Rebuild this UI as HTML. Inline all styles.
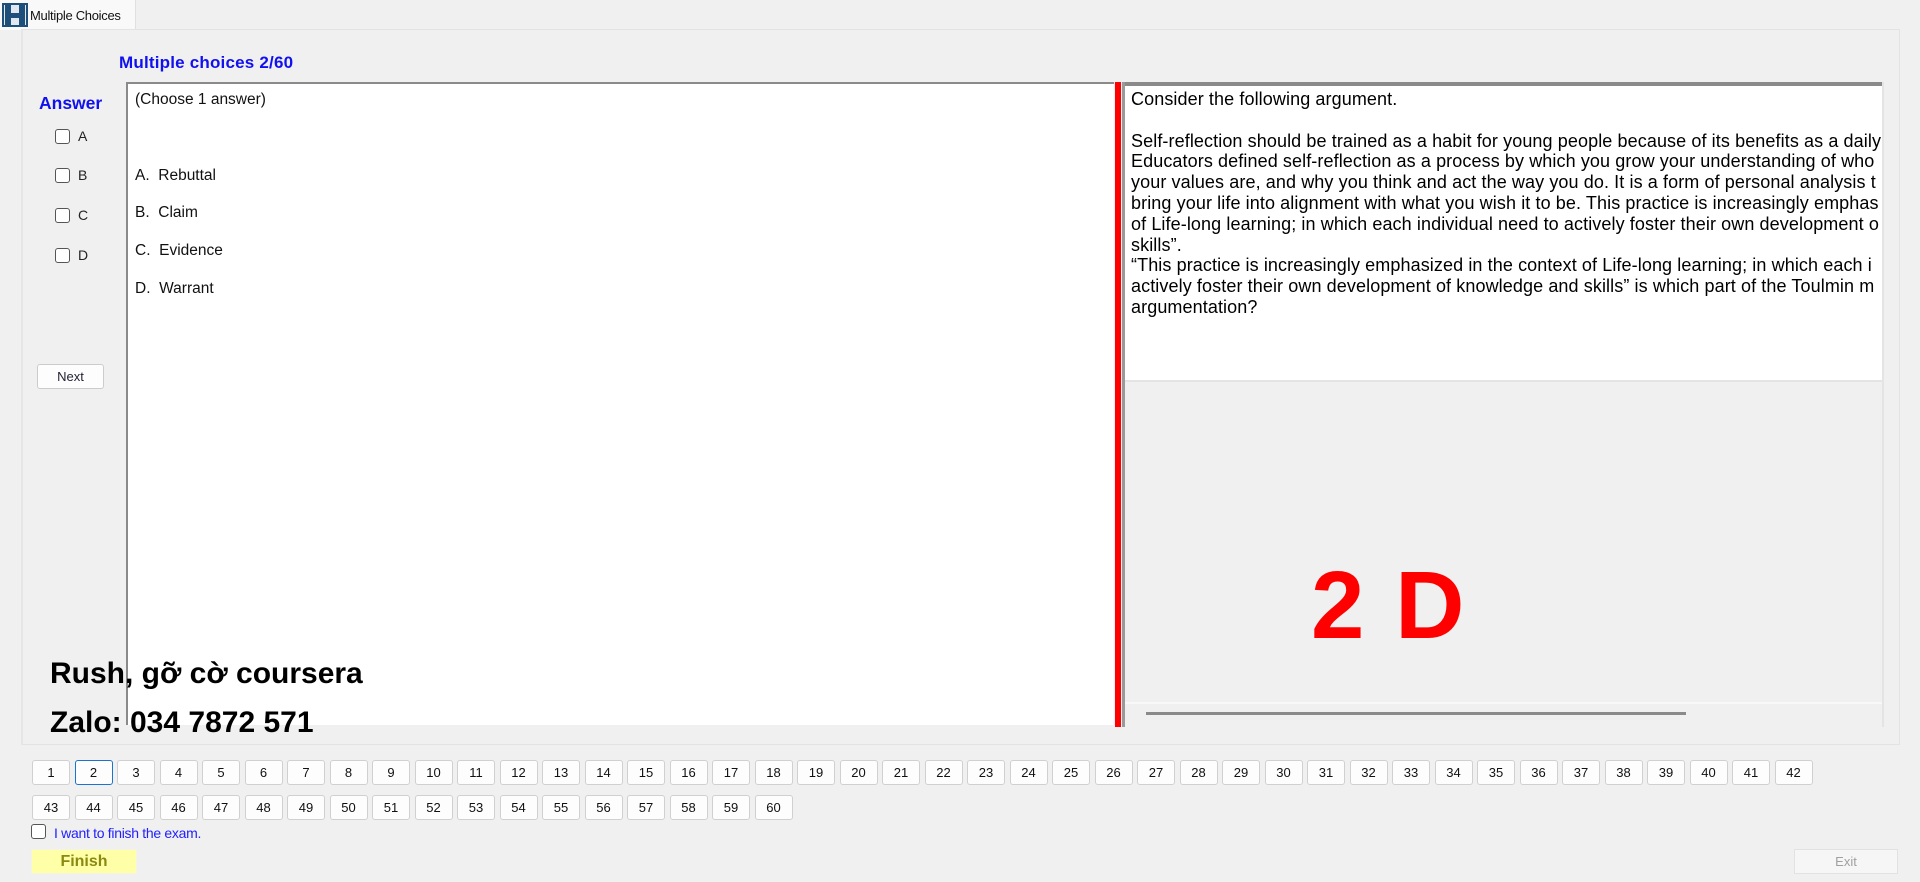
<!DOCTYPE html>
<html><head><meta charset="utf-8"><style>
*{margin:0;padding:0;box-sizing:border-box}
body{width:1920px;height:882px;background:#f0f0f0;font-family:"Liberation Sans",Arial,sans-serif;position:relative;overflow:hidden}
.a{position:absolute}
.tab{left:0;top:0;width:136px;height:30px;background:#f9f9f9;border-right:1px solid #e0e0e0}
.panel{left:21px;top:29px;width:1879px;height:716px;border:1px solid #e3e3e3;border-left:2px solid #e6e6e6;background:#f0f0f0}
.cb{width:15px;height:15px;border:1px solid #555;border-radius:3px;background:#fff}
.lbl{font-size:14px;color:#222}
.opt{font-size:15.5px;color:#111;left:135px}
.nb{position:absolute;width:38px;height:25px;background:#fdfdfd;border:1px solid #d0d0d0;border-radius:3px;font-size:13px;text-align:center;line-height:23px;color:#111}
</style></head><body>
<div class="a tab"></div>
<svg class="a" style="left:2px;top:3px" width="26" height="24" viewBox="0 0 26 24"><rect width="26" height="24" fill="#1d4f7a"/><rect x="2" y="2" width="22" height="20" fill="#dfe7ef"/><rect x="3" y="2" width="6" height="20" fill="#1d4f7a"/><rect x="17" y="2" width="6" height="20" fill="#1d4f7a"/><rect x="9" y="10" width="8" height="5" fill="#1d4f7a"/></svg>
<div class="a" style="left:30px;top:8px;font-size:13px;color:#111;letter-spacing:-0.3px">Multiple Choices</div>
<div class="a panel"></div>
<div class="a" style="left:119px;top:53px;font-size:17px;font-weight:bold;color:#1010f0;letter-spacing:0.2px">Multiple choices 2/60</div>
<div class="a" style="left:39px;top:93px;font-size:17.5px;font-weight:bold;color:#1010f0">Answer</div>
<div class="a cb" style="left:55px;top:129px"></div><div class="a lbl" style="left:78px;top:128px">A</div>
<div class="a cb" style="left:55px;top:168px"></div><div class="a lbl" style="left:78px;top:167px">B</div>
<div class="a cb" style="left:55px;top:208px"></div><div class="a lbl" style="left:78px;top:207px">C</div>
<div class="a cb" style="left:55px;top:248px"></div><div class="a lbl" style="left:78px;top:247px">D</div>
<div class="a" style="left:37px;top:364px;width:67px;height:25px;background:#fdfdfd;border:1px solid #ccc;border-radius:3px;font-size:13px;text-align:center;line-height:23px;color:#223">Next</div>
<div class="a" style="left:126px;top:82px;width:988px;height:643px;background:#fff;border-left:2px solid #8a8a8a;border-top:2px solid #8a8a8a"></div>
<div class="a opt" style="top:91px">(Choose 1 answer)</div>
<div class="a opt" style="top:167px">A.&nbsp; Rebuttal</div>
<div class="a opt" style="top:204px">B.&nbsp; Claim</div>
<div class="a opt" style="top:242px">C.&nbsp; Evidence</div>
<div class="a opt" style="top:280px">D.&nbsp; Warrant</div>
<div class="a" style="left:1115px;top:82px;width:6px;height:645px;background:#ff0000"></div>
<div class="a" style="left:1122px;top:82px;width:3px;height:645px;background:#9a9a9a"></div>
<div class="a" style="left:1125px;top:82px;width:757px;height:298px;background:#fff;border-top:4px solid #8a8a8a;overflow:hidden">
<div style="position:absolute;left:6px;top:3px;font-size:18px;line-height:20.8px;white-space:nowrap;color:#000;letter-spacing:0.1px">
Consider the following argument.<br><br>
Self-reflection should be trained as a habit for young people because of its benefits as a daily<br>
Educators defined self-reflection as a process by which you grow your understanding of who<br>
your values are, and why you think and act the way you do. It is a form of personal analysis t<br>
bring your life into alignment with what you wish it to be. This practice is increasingly emphas<br>
of Life-long learning; in which each individual need to actively foster their own development o<br>
skills”.<br>
“This practice is increasingly emphasized in the context of Life-long learning; in which each i<br>
actively foster their own development of knowledge and skills” is which part of the Toulmin m<br>
argumentation?</div></div>
<div class="a" style="left:1125px;top:380px;width:757px;height:2px;background:#e4e4e4"></div>
<div class="a" style="left:1125px;top:702px;width:757px;height:2px;background:#f8f8f8"></div>
<div class="a" style="left:1146px;top:712px;width:540px;height:3px;background:#8a8a8a"></div>
<div class="a" style="left:1882px;top:82px;width:2px;height:645px;background:#e4e4e4"></div>
<div class="a" style="left:1311px;top:551px;font-size:96px;font-weight:bold;color:#ff0000;letter-spacing:2px">2 D</div>
<div class="a" style="left:50px;top:657px;font-size:30px;font-weight:bold;color:#000">Rush, gỡ cờ coursera</div>
<div class="a" style="left:50px;top:706px;font-size:30px;font-weight:bold;color:#000">Zalo: 034 7872 571</div>
<div class="nb" style="left:32px;top:760px">1</div><div class="nb" style="left:74.5px;top:760px;border:1px solid #1a73d0">2</div><div class="nb" style="left:117px;top:760px">3</div><div class="nb" style="left:159.5px;top:760px">4</div><div class="nb" style="left:202px;top:760px">5</div><div class="nb" style="left:244.5px;top:760px">6</div><div class="nb" style="left:287px;top:760px">7</div><div class="nb" style="left:329.5px;top:760px">8</div><div class="nb" style="left:372px;top:760px">9</div><div class="nb" style="left:414.5px;top:760px">10</div><div class="nb" style="left:457px;top:760px">11</div><div class="nb" style="left:499.5px;top:760px">12</div><div class="nb" style="left:542px;top:760px">13</div><div class="nb" style="left:584.5px;top:760px">14</div><div class="nb" style="left:627px;top:760px">15</div><div class="nb" style="left:669.5px;top:760px">16</div><div class="nb" style="left:712px;top:760px">17</div><div class="nb" style="left:754.5px;top:760px">18</div><div class="nb" style="left:797px;top:760px">19</div><div class="nb" style="left:839.5px;top:760px">20</div><div class="nb" style="left:882px;top:760px">21</div><div class="nb" style="left:924.5px;top:760px">22</div><div class="nb" style="left:967px;top:760px">23</div><div class="nb" style="left:1009.5px;top:760px">24</div><div class="nb" style="left:1052px;top:760px">25</div><div class="nb" style="left:1094.5px;top:760px">26</div><div class="nb" style="left:1137px;top:760px">27</div><div class="nb" style="left:1179.5px;top:760px">28</div><div class="nb" style="left:1222px;top:760px">29</div><div class="nb" style="left:1264.5px;top:760px">30</div><div class="nb" style="left:1307px;top:760px">31</div><div class="nb" style="left:1349.5px;top:760px">32</div><div class="nb" style="left:1392px;top:760px">33</div><div class="nb" style="left:1434.5px;top:760px">34</div><div class="nb" style="left:1477px;top:760px">35</div><div class="nb" style="left:1519.5px;top:760px">36</div><div class="nb" style="left:1562px;top:760px">37</div><div class="nb" style="left:1604.5px;top:760px">38</div><div class="nb" style="left:1647px;top:760px">39</div><div class="nb" style="left:1689.5px;top:760px">40</div><div class="nb" style="left:1732px;top:760px">41</div><div class="nb" style="left:1774.5px;top:760px">42</div>
<div class="nb" style="left:32px;top:795px">43</div><div class="nb" style="left:74.5px;top:795px">44</div><div class="nb" style="left:117px;top:795px">45</div><div class="nb" style="left:159.5px;top:795px">46</div><div class="nb" style="left:202px;top:795px">47</div><div class="nb" style="left:244.5px;top:795px">48</div><div class="nb" style="left:287px;top:795px">49</div><div class="nb" style="left:329.5px;top:795px">50</div><div class="nb" style="left:372px;top:795px">51</div><div class="nb" style="left:414.5px;top:795px">52</div><div class="nb" style="left:457px;top:795px">53</div><div class="nb" style="left:499.5px;top:795px">54</div><div class="nb" style="left:542px;top:795px">55</div><div class="nb" style="left:584.5px;top:795px">56</div><div class="nb" style="left:627px;top:795px">57</div><div class="nb" style="left:669.5px;top:795px">58</div><div class="nb" style="left:712px;top:795px">59</div><div class="nb" style="left:754.5px;top:795px">60</div>
<div class="a cb" style="left:31px;top:824px"></div>
<div class="a" style="left:54px;top:825px;font-size:14px;color:#2020ff;letter-spacing:-0.3px">I want to finish the exam.</div>
<div class="a" style="left:31px;top:849px;width:106px;height:25px;background:#ffffa8;border:1px solid #f4f4e0;font-size:16px;font-weight:bold;color:#8a8a10;text-align:center;line-height:23px">Finish</div>
<div class="a" style="left:1794px;top:849px;width:104px;height:25px;background:#f6f6f6;border:1px solid #e2e2e2;font-size:13px;color:#a0a0a0;text-align:center;line-height:23px">Exit</div>
</body></html>
